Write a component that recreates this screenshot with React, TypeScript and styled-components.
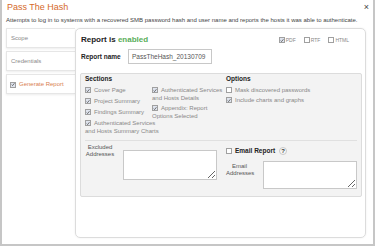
import React from "react";
import styled, { createGlobalStyle } from "styled-components";

const Global = createGlobalStyle`
  html, body { margin: 0; padding: 0; background: #fff; }
  body { font-family: "Liberation Sans", Arial, sans-serif; }
  * { box-sizing: border-box; }
`;

const Dialog = styled.div`
  width: 375px;
  height: 246px;
  border: 2px solid #c6c6c6;
  border-top: none;
  padding: 2px 7px 0 4px;
  background: #fff;
  display: flex;
  flex-direction: column;
`;

const TitleRow = styled.div`
  display: flex;
  justify-content: space-between;
  align-items: flex-start;
  height: 11px;
`;

const Title = styled.div`
  font-size: 9px;
  line-height: 11px;
  color: #d5692a;
  padding-left: 1px;
`;

const Close = styled.div`
  font-size: 9px;
  line-height: 9px;
  color: #444;
  margin-right: -3px;
  margin-top: 1px;
`;

const Description = styled.div`
  margin-top: 4px;
  font-size: 6px;
  line-height: 7px;
  color: #444;
  white-space: nowrap;
`;

const Body = styled.div`
  margin-top: 4px;
  display: flex;
  height: 210px;
`;

const Tabs = styled.div`
  width: 69px;
  display: flex;
  flex-direction: column;
  gap: 3px;
`;

const Tab = styled.div<{ $active?: boolean }>`
  height: 20px;
  border: 1px solid #e6e6e6;
  border-right: none;
  box-shadow: 0 1px 2px rgba(0, 0, 0, 0.08);
  background: #fff;
  display: flex;
  align-items: center;
  gap: 3px;
  padding-left: ${(p) => (p.$active ? "3px" : "4px")};
  font-size: 6px;
  color: ${(p) => (p.$active ? "#d8804f" : "#8a8a8a")};
`;

const Panel = styled.div`
  flex: 1;
  border: 1px solid #dcdcdc;
  border-radius: 5px;
  box-shadow: 0 0 2px rgba(0, 0, 0, 0.08);
  padding: 3px 3px 0 4px;
  display: flex;
  flex-direction: column;
`;

const HeaderRow = styled.div`
  display: flex;
  justify-content: space-between;
  align-items: center;
  height: 14px;
  padding-left: 1px;
`;

const Status = styled.div`
  font-size: 8px;
  font-weight: bold;
  color: #222;
`;

const Enabled = styled.span`
  color: #5aae5a;
`;

const Formats = styled.div`
  display: flex;
  gap: 8px;
  margin-right: 13px;
  margin-top: 2px;
`;

const CheckLabel = styled.label<{ $size?: number; $bold?: boolean; $gap?: number }>`
  display: flex;
  align-items: flex-start;
  gap: ${(p) => p.$gap ?? 3}px;
  white-space: nowrap;
  font-size: ${(p) => p.$size ?? 6}px;
  line-height: 8px;
  color: ${(p) => (p.$bold ? "#222" : "#888")};
  font-weight: ${(p) => (p.$bold ? "bold" : "normal")};
`;

const Box = styled.span<{ $checked?: boolean }>`
  flex: none;
  width: 6px;
  height: 6px;
  margin-top: 1px;
  border: 1px solid #a0a0a0;
  background: ${(p) => (p.$checked ? "#dfe4ee" : "#fff")};
  display: flex;
  align-items: center;
  justify-content: center;
`;

const Check = ({ checked }: { checked?: boolean }) => (
  <Box $checked={checked}>
    {checked && (
      <svg width="5" height="5" viewBox="0 0 5 5">
        <path d="M0.8 2.6 L2 3.8 L4.3 0.9" stroke="#444" strokeWidth="0.9" fill="none" />
      </svg>
    )}
  </Box>
);

const NameRow = styled.div`
  display: flex;
  align-items: center;
  margin-top: 3px;
  padding-left: 1px;
`;

const NameLabel = styled.div`
  width: 47px;
  font-size: 6.5px;
  font-weight: bold;
  color: #222;
`;

const NameInput = styled.div`
  width: 84px;
  height: 15px;
  border: 1px solid #c8c8c8;
  font-size: 6.5px;
  color: #555;
  padding-left: 3px;
  display: flex;
  align-items: center;
`;

const Sections = styled.div`
  margin-top: 9px;
  height: 124px;
  background: #f3f3f3;
  border: 1px solid #dcdcdc;
  border-radius: 2px;
  padding: 1px 4px 0 4px;
`;

const TopGrid = styled.div`
  display: grid;
  grid-template-columns: 67px 74px 1fr;
`;

const Column = styled.div<{ $gap?: number }>`
  display: flex;
  flex-direction: column;
  gap: ${(p) => p.$gap ?? 3}px;
  min-width: 0;
`;

const ColTitle = styled.div<{ $space?: number }>`
  font-size: 6.5px;
  font-weight: bold;
  color: #222;
  line-height: 8px;
  margin-bottom: ${(p) => p.$space ?? 0}px;
`;

const Item = styled.div`
  font-size: 6px;
  line-height: 8px;
  color: #888;
  white-space: nowrap;
`;

const ItemCheck = styled.span`
  display: inline-flex;
  vertical-align: top;
  margin-right: 3px;
`;

const Separator = styled.div`
  margin-top: 5px;
  border-top: 1px solid #e0e0e0;
`;

const LowerGrid = styled.div`
  display: grid;
  grid-template-columns: 141px 1fr;
`;

const FieldRow = styled.div<{ $top?: number }>`
  display: flex;
  align-items: flex-start;
  margin-top: ${(p) => p.$top ?? 0}px;
`;

const FieldLabel = styled.div<{ $width: number; $top: number }>`
  width: ${(p) => p.$width}px;
  margin-top: ${(p) => p.$top}px;
  text-align: center;
  font-size: 6px;
  line-height: 7px;
  color: #555;
`;

const Area = styled.textarea<{ $w: number; $h: number; $left: number; $top?: number }>`
  width: ${(p) => p.$w}px;
  height: ${(p) => p.$h}px;
  margin: ${(p) => p.$top ?? 0}px 0 0 ${(p) => p.$left}px;
  border: 1px solid #c8c8c8;
  background: #fff;
  padding: 0;
  resize: both;
  outline: none;
`;

const EmailHead = styled.div`
  display: flex;
  align-items: center;
  gap: 4px;
  margin-top: 6px;
`;

const Help = styled.span`
  width: 8px;
  height: 8px;
  border-radius: 50%;
  border: 1px solid #c9c9c9;
  background: #f7f7f7;
  font-size: 6px;
  font-weight: bold;
  color: #333;
  display: flex;
  align-items: center;
  justify-content: center;
`;

const Section = ({ checked, children }: { checked?: boolean; children: React.ReactNode }) => (
  <Item>
    <ItemCheck>
      <Check checked={checked} />
    </ItemCheck>
    {children}
  </Item>
);

export default function App() {
  return (
    <>
      <Global />
      <Dialog>
        <TitleRow>
          <Title>Pass The Hash</Title>
          <Close>×</Close>
        </TitleRow>
        <Description>
          Attempts to log in to systems with a recovered SMB password hash and user name and reports the hosts it was able to authenticate.
        </Description>
        <Body>
          <Tabs>
            <Tab>Scope</Tab>
            <Tab>Credentials</Tab>
            <Tab $active>
              <Check checked />
              Generate Report
            </Tab>
          </Tabs>
          <Panel>
            <HeaderRow>
              <Status>
                Report is <Enabled>enabled</Enabled>
              </Status>
              <Formats>
                <CheckLabel $size={5} $gap={1}>
                  <Check checked />
                  PDF
                </CheckLabel>
                <CheckLabel $size={5} $gap={1}>
                  <Check />
                  RTF
                </CheckLabel>
                <CheckLabel $size={5} $gap={1}>
                  <Check />
                  HTML
                </CheckLabel>
              </Formats>
            </HeaderRow>
            <NameRow>
              <NameLabel>Report name</NameLabel>
              <NameInput>PassTheHash_20130709</NameInput>
            </NameRow>
            <Sections>
              <TopGrid>
                <Column>
                  <ColTitle>Sections</ColTitle>
                  <Section checked>Cover Page</Section>
                  <Section checked>Project Summary</Section>
                  <Section checked>Findings Summary</Section>
                  <Section checked>
                    Authenticated Services
                    <br />
                    and Hosts Summary Charts
                  </Section>
                </Column>
                <Column $gap={2}>
                  <ColTitle $space={1}>&nbsp;</ColTitle>
                  <Section checked>
                    Authenticated Services
                    <br />
                    and Hosts Details
                  </Section>
                  <Section checked>
                    Appendix: Report
                    <br />
                    Options Selected
                  </Section>
                </Column>
                <Column $gap={2}>
                  <ColTitle $space={1}>Options</ColTitle>
                  <Section>Mask discovered passwords</Section>
                  <Section checked>Include charts and graphs</Section>
                </Column>
              </TopGrid>
              <Separator />
              <LowerGrid>
                <FieldRow>
                  <FieldLabel $width={30} $top={3}>
                    Excluded
                    <br />
                    Addresses
                  </FieldLabel>
                  <Area $w={94} $h={30} $left={8} $top={9} />
                </FieldRow>
                <div>
                  <EmailHead>
                    <CheckLabel $size={6.5} $bold>
                      <Check />
                      Email Report
                    </CheckLabel>
                    <Help>?</Help>
                  </EmailHead>
                  <FieldRow $top={6}>
                    <FieldLabel $width={27} $top={2}>
                      Email
                      <br />
                      Addresses
                    </FieldLabel>
                    <Area $w={94} $h={28} $left={10} />
                  </FieldRow>
                </div>
              </LowerGrid>
            </Sections>
          </Panel>
        </Body>
      </Dialog>
    </>
  );
}
